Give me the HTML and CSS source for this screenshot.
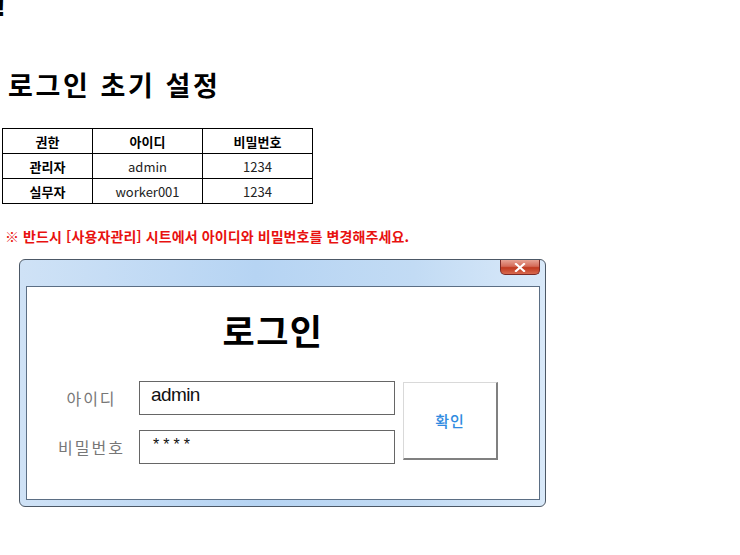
FILE: index.html
```html
<!DOCTYPE html>
<html lang="ko">
<head>
<meta charset="utf-8">
<title>로그인 초기 설정</title>
<link rel="stylesheet" href="styles.css">
</head>
<body>
<div class="corner">!</div>
<h1 class="heading">로그인 초기 설정</h1>
<table class="accounts">
  <thead>
    <tr><th>권한</th><th>아이디</th><th>비밀번호</th></tr>
  </thead>
  <tbody>
    <tr><th>관리자</th><td>admin</td><td>1234</td></tr>
    <tr><th>실무자</th><td>worker001</td><td>1234</td></tr>
  </tbody>
</table>
<p class="note">※ 반드시 [사용자관리] 시트에서 아이디와 비밀번호를 변경해주세요.</p>
<div class="window">
  <div class="titlebar">
    <div class="close"><svg width="14" height="9" viewBox="0 0 14 9"><path d="M3 1 L11 8 M11 1 L3 8" stroke="#fff" stroke-width="2.2" stroke-linecap="square"/></svg></div>
  </div>
  <div class="panel">
    <div class="dlg-title">로그인</div>
    <div class="form">
      <div class="label">아이디</div>
      <div class="field">admin</div>
      <div class="btn">확인</div>
      <div class="label">비밀번호</div>
      <div class="field stars">****</div>
    </div>
  </div>
</div>
</body>
</html>
```
FILE: styles.css
```css
html, body {
  margin: 0;
  padding: 0;
  background: #fff;
}
body {
  font-family: "Noto Sans CJK KR", "Noto Sans", sans-serif;
  color: #000;
}
.corner {
  height: 21px;
  overflow: hidden;
  font-family: "Liberation Sans", sans-serif;
  font-weight: bold;
  font-size: 30px;
  line-height: 12px;
  margin-left: -4px;
}
.heading {
  margin: 46px 0 0 8px;
  font-size: 27px;
  font-weight: bold;
  letter-spacing: 2.6px;
  line-height: 36px;
}
.accounts {
  margin: 25px 0 0 2px;
  border-collapse: collapse;
  font-size: 13px;
}
.accounts th, .accounts td {
  border: 1px solid #000;
  height: 24px;
  padding: 0;
  text-align: center;
  line-height: 15px;
}
.accounts th { font-weight: bold; }
.accounts td { font-weight: normal; color: #222; }
.accounts tr > :nth-child(1) { width: 89px; }
.accounts tr > :nth-child(2) { width: 109px; }
.accounts tr > :nth-child(3) { width: 109px; }
.note {
  margin: 23px 0 0 5px;
  color: #e8110f;
  font-weight: bold;
  font-size: 14px;
  letter-spacing: 0.1px;
  line-height: 18px;
}
.window {
  box-sizing: border-box;
  margin: 14px 0 0 19px;
  width: 527px;
  height: 248px;
  border: 1px solid #4c5866;
  border-radius: 6px;
  background: linear-gradient(90deg, #cfe2f6 0%, #b6d4f3 45%, #c2dbf4 75%, #d9e9f9 100%);
  display: flex;
  flex-direction: column;
  padding: 0 5px 6px 6px;
}
.titlebar {
  height: 26px;
  flex: none;
  display: flex;
  justify-content: flex-end;
  align-items: flex-start;
}
.close {
  width: 40px;
  height: 15px;
  box-sizing: border-box;
  border: 1px solid #7a2a26;
  border-top: none;
  border-radius: 0 0 5px 5px;
  background: linear-gradient(180deg, #e7a394 0%, #d46b58 45%, #c0391f 55%, #d86a4f 100%);
  display: flex;
  align-items: center;
  justify-content: center;
}
.close svg { display: block; }
.panel {
  flex: 1;
  background: #fff;
  border: 1px solid #5b6e84;
  display: flex;
  flex-direction: column;
}
.dlg-title {
  margin-top: 21px;
  padding-right: 20px;
  text-align: center;
  font-size: 35px;
  font-weight: bold;
  line-height: 44px;
  letter-spacing: 1.5px;
}
.form {
  margin: 29px 0 0 23px;
  display: grid;
  grid-template-columns: 86px 256px 95px;
  grid-template-rows: 34px 34px;
  row-gap: 15px;
  column-gap: 0;
}
.label {
  font-size: 16px;
  color: #777;
  letter-spacing: 2px;
  text-align: center;
  line-height: 34px;
  margin-right: 3px;
}
.field {
  border: 1px solid #666;
  box-sizing: border-box;
  margin-left: 3px;
  width: 256px;
  font-family: "Liberation Sans", sans-serif;
  font-size: 19px;
  letter-spacing: -0.6px;
  color: #111;
  padding-left: 11px;
  line-height: 26px;
}
.stars {
  font-size: 16px;
  letter-spacing: 4px;
  padding-left: 13px;
  line-height: 28px;
}
.btn {
  grid-row: 1 / span 2;
  grid-column: 3;
  align-self: start;
  margin: 1px 0 0 11px;
  width: 95px;
  height: 78px;
  box-sizing: border-box;
  border-top: 1px solid #d9d9d9;
  border-left: 1px solid #d9d9d9;
  border-right: 2px solid #808080;
  border-bottom: 2px solid #808080;
  display: flex;
  align-items: center;
  justify-content: center;
  color: #2f8ae0;
  font-size: 15px;
  font-weight: 500;
  letter-spacing: 1px;
}
```
